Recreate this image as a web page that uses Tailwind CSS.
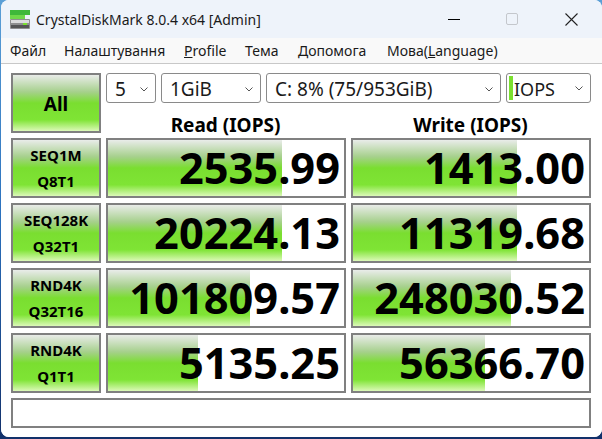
<!DOCTYPE html>
<html lang="uk">
<head>
  <meta charset="UTF-8" />
  <title>CrystalDiskMark</title>
  <script src="https://cdn.jsdelivr.net/npm/@tailwindcss/browser@4"></script>
</head>
<body class="w-[602px] h-[439px] overflow-hidden bg-[linear-gradient(180deg,#5b9fd6_0%,#2a70bd_50%,#12306a_100%)] font-['Noto_Sans',sans-serif] text-black">
  <div class="ml-[1px] w-[601px] h-[437px] rounded-lg bg-white overflow-hidden flex flex-col">

    <!-- title bar -->
    <div class="h-[38px] flex items-center bg-[#eef3fa]">
      <svg class="ml-[9px] w-[20px] h-[19px]" viewBox="0 0 20 19">
        <rect x="0" y="0" width="20" height="5" fill="#3fb83a" />
        <rect x="0" y="5" width="15" height="4" fill="#6fd84a" />
        <rect x="0" y="9" width="20" height="10" rx="1" fill="#8f8f8f" />
        <rect x="1" y="10" width="18" height="3" fill="#dcdcdc" />
        <rect x="1" y="15" width="18" height="3" fill="#555" />
        <rect x="13" y="13" width="4" height="2" fill="#7be030" />
      </svg>
      <span class="ml-[6px] text-[14px] text-[#1a1a1a]">CrystalDiskMark 8.0.4 x64 [Admin]</span>
      <div class="ml-auto flex items-center">
        <div class="w-[12px] h-px bg-black mr-[46px]"></div>
        <div class="w-[12px] h-[12px] rounded-[2px] border border-[#c4c7cc] mr-[47px]"></div>
        <svg class="w-[13px] h-[13px] mr-[24px]" viewBox="0 0 13 13" fill="none" stroke="#222" stroke-width="1.1">
          <path d="M0.5 0.5 L12.5 12.5 M12.5 0.5 L0.5 12.5" />
        </svg>
      </div>
    </div>

    <!-- menu -->
    <div class="h-[26px] flex items-center bg-[#f9f9f9] border-b border-[#c8c8c8] text-[14px] text-[#1a1a1a] pl-[9px] pb-[1px]">
      <span class="w-[54px]">Файл</span>
      <span class="w-[120px]">Налаштування</span>
      <span class="w-[61px]"><span class="underline">P</span>rofile</span>
      <span class="w-[53px]">Тема</span>
      <span class="w-[89px]">Допомога</span>
      <span>Мова(<span class="underline">L</span>anguage)</span>
    </div>

    <!-- main -->
    <div class="flex-1 pl-[10px] pt-[9px] grid grid-cols-[90px_240px_240px] grid-rows-[30px_25px_60px_60px_60px_60px_30px] gap-x-[5px] gap-y-[5px] content-start bg-white">

      <button class="row-span-2 h-[60px] pt-[3px] border-2 border-[#808080] bg-[linear-gradient(180deg,#e9ece9_0%,#a6d08c_30%,#7ade30_50%,#7fe435_80%,#dcf9b8_100%)] text-[19px] font-bold">All</button>

      <div class="col-span-2 flex gap-[5px] h-[30px] text-[19px] text-[#1a1a1a]">
        <div class="w-[50px] flex items-center justify-between pl-[8px] pr-[7px] pt-[2px] border border-[#8a8a8a] rounded-[3px] bg-white">
          5
          <svg class="w-[8px] h-[5px]" viewBox="0 0 8 5" fill="none" stroke="#555"><path d="M0.5 0.5 L4 4 L7.5 0.5" /></svg>
        </div>
        <div class="w-[100px] flex items-center justify-between pl-[8px] pr-[7px] pt-[2px] border border-[#8a8a8a] rounded-[3px] bg-white">
          1GiB
          <svg class="w-[8px] h-[5px]" viewBox="0 0 8 5" fill="none" stroke="#555"><path d="M0.5 0.5 L4 4 L7.5 0.5" /></svg>
        </div>
        <div class="w-[235px] flex items-center justify-between pl-[8px] pr-[7px] pt-[2px] border border-[#8a8a8a] rounded-[3px] bg-white">
          C: 8% (75/953GiB)
          <svg class="w-[8px] h-[5px]" viewBox="0 0 8 5" fill="none" stroke="#555"><path d="M0.5 0.5 L4 4 L7.5 0.5" /></svg>
        </div>
        <div class="w-[85px] flex items-center pl-[2px] pr-[7px] border border-[#8a8a8a] rounded-[3px] bg-white">
          <span class="w-[4px] h-[24px] bg-[#7be030] mr-[1px]"></span>
          <span class="text-[18px] pt-[2px]">IOPS</span>
          <svg class="ml-auto w-[8px] h-[5px]" viewBox="0 0 8 5" fill="none" stroke="#555"><path d="M0.5 0.5 L4 4 L7.5 0.5" /></svg>
        </div>
      </div>

      <div class="col-start-2 text-center text-[19px] font-bold leading-[25px] pt-[5px] pr-[1px]">Read (IOPS)</div>
      <div class="text-center text-[19px] font-bold leading-[25px] pt-[5px] pr-[1px]">Write (IOPS)</div>

      <!-- SEQ1M -->
      <div class="border-2 border-[#808080] bg-[linear-gradient(180deg,#e9ece9_0%,#a6d08c_30%,#7ade30_50%,#7fe435_80%,#dcf9b8_100%)] flex flex-col items-center justify-center text-[15px] font-bold leading-[26px]"><span>SEQ1M</span><span>Q8T1</span></div>
      <div class="relative border-2 border-[#808080] bg-white flex items-center justify-end pr-[4px] text-[43.4px] font-bold">
        <div class="absolute inset-y-0 left-0 w-[174px] bg-[linear-gradient(180deg,#e9ece9_0%,#a6d08c_30%,#7ade30_50%,#7fe435_80%,#dcf9b8_100%)]"></div>
        <span class="relative">2535.99</span>
      </div>
      <div class="relative border-2 border-[#808080] bg-white flex items-center justify-end pr-[4px] text-[43.4px] font-bold">
        <div class="absolute inset-y-0 left-0 w-[164px] bg-[linear-gradient(180deg,#e9ece9_0%,#a6d08c_30%,#7ade30_50%,#7fe435_80%,#dcf9b8_100%)]"></div>
        <span class="relative">1413.00</span>
      </div>

      <!-- SEQ128K -->
      <div class="border-2 border-[#808080] bg-[linear-gradient(180deg,#e9ece9_0%,#a6d08c_30%,#7ade30_50%,#7fe435_80%,#dcf9b8_100%)] flex flex-col items-center justify-center text-[15px] font-bold leading-[26px]"><span>SEQ128K</span><span>Q32T1</span></div>
      <div class="relative border-2 border-[#808080] bg-white flex items-center justify-end pr-[4px] text-[43.4px] font-bold">
        <div class="absolute inset-y-0 left-0 w-[174px] bg-[linear-gradient(180deg,#e9ece9_0%,#a6d08c_30%,#7ade30_50%,#7fe435_80%,#dcf9b8_100%)]"></div>
        <span class="relative">20224.13</span>
      </div>
      <div class="relative border-2 border-[#808080] bg-white flex items-center justify-end pr-[4px] text-[43.4px] font-bold">
        <div class="absolute inset-y-0 left-0 w-[164px] bg-[linear-gradient(180deg,#e9ece9_0%,#a6d08c_30%,#7ade30_50%,#7fe435_80%,#dcf9b8_100%)]"></div>
        <span class="relative">11319.68</span>
      </div>

      <!-- RND4K Q32T16 -->
      <div class="border-2 border-[#808080] bg-[linear-gradient(180deg,#e9ece9_0%,#a6d08c_30%,#7ade30_50%,#7fe435_80%,#dcf9b8_100%)] flex flex-col items-center justify-center text-[15px] font-bold leading-[26px]"><span>RND4K</span><span>Q32T16</span></div>
      <div class="relative border-2 border-[#808080] bg-white flex items-center justify-end pr-[4px] text-[43.4px] font-bold">
        <div class="absolute inset-y-0 left-0 w-[142px] bg-[linear-gradient(180deg,#e9ece9_0%,#a6d08c_30%,#7ade30_50%,#7fe435_80%,#dcf9b8_100%)]"></div>
        <span class="relative">101809.57</span>
      </div>
      <div class="relative border-2 border-[#808080] bg-white flex items-center justify-end pr-[4px] text-[43.4px] font-bold">
        <div class="absolute inset-y-0 left-0 w-[158px] bg-[linear-gradient(180deg,#e9ece9_0%,#a6d08c_30%,#7ade30_50%,#7fe435_80%,#dcf9b8_100%)]"></div>
        <span class="relative">248030.52</span>
      </div>

      <!-- RND4K Q1T1 -->
      <div class="border-2 border-[#808080] bg-[linear-gradient(180deg,#e9ece9_0%,#a6d08c_30%,#7ade30_50%,#7fe435_80%,#dcf9b8_100%)] flex flex-col items-center justify-center text-[15px] font-bold leading-[26px]"><span>RND4K</span><span>Q1T1</span></div>
      <div class="relative border-2 border-[#808080] bg-white flex items-center justify-end pr-[4px] text-[43.4px] font-bold">
        <div class="absolute inset-y-0 left-0 w-[90px] bg-[linear-gradient(180deg,#e9ece9_0%,#a6d08c_30%,#7ade30_50%,#7fe435_80%,#dcf9b8_100%)]"></div>
        <span class="relative">5135.25</span>
      </div>
      <div class="relative border-2 border-[#808080] bg-white flex items-center justify-end pr-[4px] text-[43.4px] font-bold">
        <div class="absolute inset-y-0 left-0 w-[132px] bg-[linear-gradient(180deg,#e9ece9_0%,#a6d08c_30%,#7ade30_50%,#7fe435_80%,#dcf9b8_100%)]"></div>
        <span class="relative">56366.70</span>
      </div>

      <!-- status -->
      <div class="col-span-3 border-2 border-[#808080] bg-white"></div>
    </div>
  </div>
</body>
</html>
